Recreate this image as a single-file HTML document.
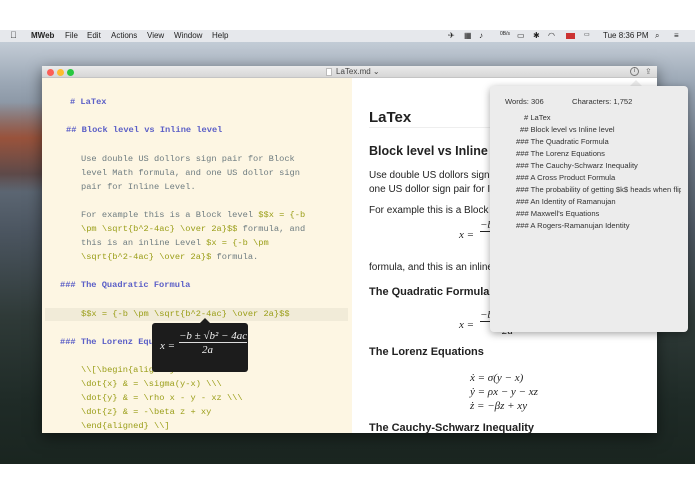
<!DOCTYPE html>
<html><head><meta charset="utf-8"><style>
*{margin:0;padding:0;box-sizing:border-box}
body{width:695px;height:494px;background:#fff;position:relative;overflow:hidden;font-family:"Liberation Sans",sans-serif}
.abs{position:absolute;white-space:nowrap}
#desk{position:absolute;left:0;top:42px;width:695px;height:422px;
background:linear-gradient(180deg,#c3ccd6 0%,#9aa6b4 10%,#6d7886 25%,#4b5560 45%,#2f3a38 65%,#1f2b27 85%,#1a2520 100%)}
#red{position:absolute;left:0;top:60px;width:45px;height:90px;background:linear-gradient(180deg,rgba(160,80,50,0),rgba(160,75,45,.85) 40%,rgba(90,50,40,.6) 80%,rgba(0,0,0,0))}
#menu{position:absolute;left:0;top:30px;width:695px;height:12px;background:#e6e8ec;font-size:8px;color:#222}
#menu span{position:absolute;top:1px}
#win{position:absolute;left:42px;top:66px;width:615px;height:367px;background:#fff;box-shadow:0 4px 14px rgba(0,0,0,.5)}
#tb{position:absolute;left:0;top:0;width:615px;height:12px;background:linear-gradient(#ebebeb,#d6d6d6);border-bottom:1px solid #c4c4c4}
.dot{position:absolute;top:3px;width:7px;height:7px;border-radius:50%}
#ed{position:absolute;left:0;top:12px;width:310px;height:355px;background:#fdf6e3;font-family:"Liberation Mono",monospace;font-size:8.7px;color:#6e7c80}
#ed .abs{line-height:12px}
.h{color:#5b5fc7;font-weight:bold}
.m{color:#9a9e18}
#pv{position:absolute;left:310px;top:12px;width:305px;height:355px;color:#222}
.ser{font-family:"Liberation Serif",serif;font-style:italic;font-size:11px}
#pop{position:absolute;left:490px;top:86px;width:198px;height:246px;background:#ececec;border-radius:4px;box-shadow:0 2px 8px rgba(0,0,0,.35);font-size:7.6px;color:#333}
#pop .abs{line-height:10px}
</style></head><body>
<div id="desk"><div id="red"></div></div>
<div id="menu">
<span style="left:10px;font-size:9px;top:0">&#63743;</span>
<span style="left:31px;font-weight:bold">MWeb</span>
<span style="left:65px">File</span><span style="left:87px">Edit</span><span style="left:111px">Actions</span>
<span style="left:147px">View</span><span style="left:174px">Window</span><span style="left:212px">Help</span>
<span style="left:448px">✈</span><span style="left:464px">▦</span><span style="left:479px">♪</span>
<span style="left:500px;font-size:5px">0B/s</span><span style="left:517px">▭</span><span style="left:533px">✱</span><span style="left:548px">◠</span>
<span style="left:566px;width:9px;height:6px;top:3px;background:#c33"></span>
<span style="left:584px;font-size:6px">▭</span>
<span style="left:603px">Tue 8:36 PM</span><span style="left:655px">⌕</span><span style="left:674px">≡</span>
</div>
<div id="win">
<div id="tb">
<div class="dot" style="left:5px;background:#fc5f57"></div>
<div class="dot" style="left:15px;background:#fdbc2e"></div>
<div class="dot" style="left:25px;background:#28c840"></div>
<div class="abs" style="left:284px;top:2px;width:6px;height:8px;background:#fff;border:1px solid #bbb"></div>
<div class="abs" style="left:294px;top:1px;font-size:8px;color:#444">LaTex.md ⌄</div>
<div class="abs" style="left:588px;top:1px;width:9px;height:9px;border:1px solid #777;border-radius:50%;font-size:6px;text-align:center;line-height:7px;color:#555">i</div>
<div class="abs" style="left:603px;top:1px;font-size:8px;color:#666">⇪</div>
</div>
<div id="ed">
<div class="abs h" style="left:28px;top:18px"># LaTex</div>
<div class="abs h" style="left:24px;top:46px">## Block level vs Inline level</div>
<div class="abs" style="left:39px;top:75px">Use double US dollors sign pair for Block</div>
<div class="abs" style="left:39px;top:89px">level Math formula, and one US dollor sign</div>
<div class="abs" style="left:39px;top:103px">pair for Inline Level.</div>
<div class="abs" style="left:39px;top:131px">For example this is a Block level <span class="m">$$x = {-b</span></div>
<div class="abs" style="left:39px;top:145px"><span class="m">\pm \sqrt{b^2-4ac} \over 2a}$$</span> formula, and</div>
<div class="abs" style="left:39px;top:159px">this is an inline Level <span class="m">$x = {-b \pm</span></div>
<div class="abs" style="left:39px;top:173px"><span class="m">\sqrt{b^2-4ac} \over 2a}$</span> formula.</div>
<div class="abs h" style="left:18px;top:201px">### The Quadratic Formula</div>
<div class="abs" style="left:3px;top:230px;width:303px;height:13px;background:#f1ebd8"></div>
<div class="abs m" style="left:39px;top:230px">$$x = {-b \pm \sqrt{b^2-4ac} \over 2a}$$</div>
<div class="abs h" style="left:18px;top:258px">### The Lorenz Equations</div>
<div class="abs m" style="left:39px;top:286px">\\[\begin{aligned}</div>
<div class="abs m" style="left:39px;top:300px">\dot{x} &amp; = \sigma(y-x) \\\</div>
<div class="abs m" style="left:39px;top:314px">\dot{y} &amp; = \rho x - y - xz \\\</div>
<div class="abs m" style="left:39px;top:328px">\dot{z} &amp; = -\beta z + xy</div>
<div class="abs m" style="left:39px;top:342px">\end{aligned} \\]</div>
<div class="abs" style="left:158px;top:240px;width:0;height:0;border:5px solid transparent;border-bottom-color:#1c1c1c;border-top:0"></div>
<div class="abs" style="left:110px;top:245px;width:96px;height:49px;background:#1c1c1c;border-radius:3px;color:#eee">
<div class="abs ser" style="left:8px;top:17px;color:#eee">x =</div>
<div class="abs ser" style="left:27px;top:7px;color:#eee;border-bottom:1px solid #ddd;line-height:12px">−b ± √b² − 4ac</div>
<div class="abs ser" style="left:50px;top:21px;color:#eee">2a</div>
</div>
</div>
<div id="pv">
<div class="abs" style="left:17px;top:31px;font-size:15px;font-weight:bold">LaTex</div>
<div class="abs" style="left:17px;top:49px;width:280px;height:1px;background:#eee"></div>
<div class="abs" style="left:17px;top:66px;font-size:12.5px;font-weight:bold">Block level vs Inline level</div>
<div class="abs" style="left:17px;top:92px;font-size:10px">Use double US dollors sign pair for Block level Math formula, and</div>
<div class="abs" style="left:17px;top:106px;font-size:10px">one US dollor sign pair for Inline Level.</div>
<div class="abs" style="left:17px;top:127px;font-size:10px">For example this is a Block level</div>
<div class="abs ser" style="left:107px;top:151px">x =</div>
<div class="abs ser" style="left:128px;top:141px;border-bottom:1px solid #222">−b ± √b² − 4ac</div>
<div class="abs ser" style="left:150px;top:157px">2a</div>
<div class="abs" style="left:17px;top:184px;font-size:10px">formula, and this is an inline Level</div>
<div class="abs" style="left:17px;top:208px;font-size:11px;font-weight:bold">The Quadratic Formula</div>
<div class="abs ser" style="left:107px;top:241px">x =</div>
<div class="abs ser" style="left:128px;top:231px;border-bottom:1px solid #222">−b ± √b² − 4ac</div>
<div class="abs ser" style="left:150px;top:247px">2a</div>
<div class="abs" style="left:17px;top:268px;font-size:11px;font-weight:bold">The Lorenz Equations</div>
<div class="abs ser" style="left:118px;top:294px">ẋ = σ(y − x)</div>
<div class="abs ser" style="left:118px;top:308px">ẏ = ρx − y − xz</div>
<div class="abs ser" style="left:118px;top:322px">ż = −βz + xy</div>
<div class="abs" style="left:17px;top:344px;font-size:11px;font-weight:bold">The Cauchy-Schwarz Inequality</div>
</div>
</div>
<div class="abs" style="left:630px;top:80px;width:0;height:0;border:6px solid transparent;border-bottom-color:#ececec;border-top:0"></div>
<div id="pop">
<div class="abs" style="left:15px;top:11px">Words: 306</div>
<div class="abs" style="left:82px;top:11px">Characters: 1,752</div>
<div class="abs" style="left:34px;top:27px"># LaTex</div>
<div class="abs" style="left:30px;top:39px">## Block level vs Inline level</div>
<div class="abs" style="left:26px;top:51px">### The Quadratic Formula</div>
<div class="abs" style="left:26px;top:63px">### The Lorenz Equations</div>
<div class="abs" style="left:26px;top:75px">### The Cauchy-Schwarz Inequality</div>
<div class="abs" style="left:26px;top:87px">### A Cross Product Formula</div>
<div class="abs" style="left:26px;top:99px;width:165px;overflow:hidden">### The probability of getting $k$ heads when flipping</div>
<div class="abs" style="left:26px;top:111px">### An Identity of Ramanujan</div>
<div class="abs" style="left:26px;top:123px">### Maxwell's Equations</div>
<div class="abs" style="left:26px;top:135px">### A Rogers-Ramanujan Identity</div>
</div>
</body></html>
